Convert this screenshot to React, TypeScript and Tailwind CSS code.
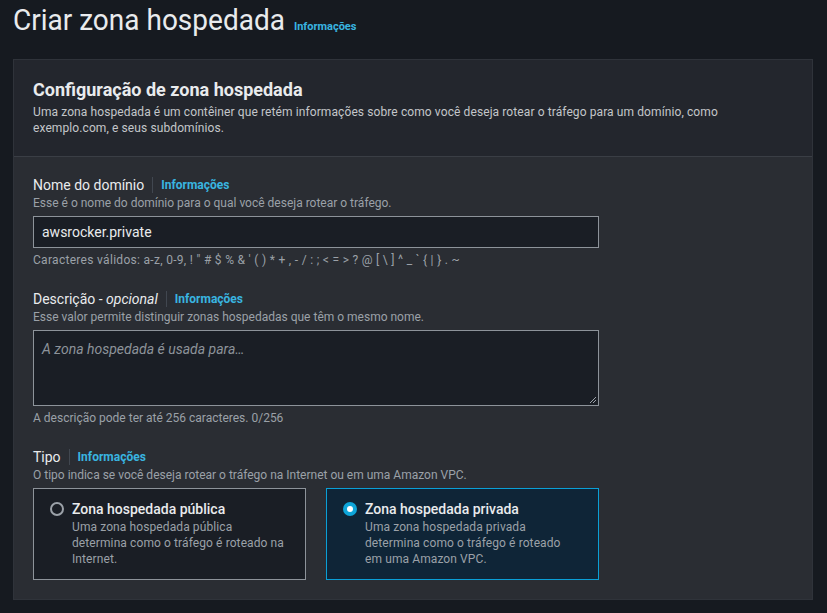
import React from "react";

const font = { fontFamily: 'Roboto, "Noto Sans", sans-serif' };

function Info({ small }: { small?: boolean }) {
  return <span className={(small ? "text-[11px]" : "text-[12px]") + " font-bold text-[#39b5e0]"}>Informações</span>;
}

function Label({ children }: { children: React.ReactNode }) {
  return (
    <div className="flex items-center gap-2 leading-[20px]">
      <span className="text-[14px] text-[#e9ebed]">{children}</span>
      <span className="w-px h-[16px] bg-[#414750]" />
      <Info />
    </div>
  );
}

export default function App() {
  return (
    <div className="min-h-[613px] w-[827px] bg-[#161a20] flex" style={font}>
      <div className="flex-1 pl-[13px] pr-[14px]">
        <div className="flex items-baseline gap-[9px] pt-[2px] h-[59px]">
          <h1 className="text-[28px] leading-[38px] font-normal text-[#e9ebed] scale-y-[1.05]">Criar zona hospedada</h1>
          <Info small />
        </div>
        <div className="bg-[#2a2d33] border border-[#2f333a] h-[541px]">
          <div className="bg-[#23262d] px-[19px] pt-[18px] pb-[20px] border-b border-[#3a3e45]">
            <h2 className="text-[18px] leading-[24px] font-bold text-[#e9ebed]">Configuração de zona hospedada</h2>
            <p className="text-[12px] leading-[16px] text-[#c3c6ca] mt-[2px] pr-[70px] tracking-[0.1px]">
              Uma zona hospedada é um contêiner que retém informações sobre como você deseja rotear o tráfego para um domínio, como exemplo.com, e seus subdomínios.
            </p>
          </div>
          <div className="px-[19px] pt-[18px] w-[604px]">
            <Label>Nome do domínio</Label>
            <p className="text-[12px] leading-[16px] text-[#9ba1a8]">Esse é o nome do domínio para o qual você deseja rotear o tráfego.</p>
            <div className="mt-[5px] h-[32px] border border-[#8d939a] bg-[#1a1e25] flex items-center px-[8px] text-[14px] text-[#e9ebed]">
              awsrocker.private
            </div>
            <p className="mt-[4px] text-[12px] leading-[16px] text-[#9ba1a8] tracking-[0.3px]">
              Caracteres válidos: a-z, 0-9, ! " # $ % &amp; ' ( ) * + , - / : ; &lt; = &gt; ? @ [ \ ] ^ _ ` {"{"} | {"}"} . ~
            </p>

            <div className="mt-[21px]">
              <div className="flex items-center gap-2 leading-[20px]">
                <span className="text-[14px] text-[#e9ebed]">
                  Descrição - <i>opcional</i>
                </span>
                <span className="w-px h-[16px] bg-[#414750]" />
                <Info />
              </div>
              <p className="text-[12px] leading-[16px] text-[#9ba1a8]">Esse valor permite distinguir zonas hospedadas que têm o mesmo nome.</p>
              <div className="relative mt-[5px] h-[76px] border border-[#8d939a] bg-[#1a1e25] px-[8px] py-[6px]">
                <span className="text-[14px] italic text-[#8d939a]">A zona hospedada é usada para…</span>
                <svg className="absolute right-[1px] bottom-[1px]" width="8" height="8" viewBox="0 0 8 8">
                  <path d="M7 1L1 7M7 4L4 7" stroke="#9ba1a8" strokeWidth="1" />
                </svg>
              </div>
              <p className="mt-[4px] text-[12px] leading-[16px] text-[#9ba1a8]">A descrição pode ter até 256 caracteres. 0/256</p>
            </div>

            <div className="mt-[21px]">
              <Label>Tipo</Label>
              <p className="text-[12px] leading-[16px] text-[#9ba1a8]">O tipo indica se você deseja rotear o tráfego na Internet ou em uma Amazon VPC.</p>
              <div className="mt-[5px] grid grid-cols-2 gap-[20px]">
                <div className="h-[92px] border border-[#8d939a] bg-[#1a1e25] pl-[16px] pt-[10px] flex gap-[8px]">
                  <span className="mt-[3px] w-[14px] h-[14px] rounded-full border-2 border-[#9ba1a8] shrink-0" />
                  <div>
                    <div className="text-[14px] leading-[20px] font-medium text-[#e9ebed]">Zona hospedada pública</div>
                    <div className="text-[12px] leading-[16px] text-[#9ba1a8] tracking-[0.1px]">
                      Uma zona hospedada pública
                      <br />
                      determina como o tráfego é roteado na
                      <br />
                      Internet.
                    </div>
                  </div>
                </div>
                <div className="h-[92px] border border-[#0a9fd6] bg-[#0f2537] pl-[16px] pt-[10px] flex gap-[8px]">
                  <span className="mt-[3px] w-[14px] h-[14px] rounded-full bg-[#0ea5d9] shrink-0 flex items-center justify-center">
                    <span className="w-[6px] h-[6px] rounded-full bg-white" />
                  </span>
                  <div>
                    <div className="text-[14px] leading-[20px] font-medium text-[#e9ebed]">Zona hospedada privada</div>
                    <div className="text-[12px] leading-[16px] text-[#9ba1a8] tracking-[0.1px]">
                      Uma zona hospedada privada
                      <br />
                      determina como o tráfego é roteado
                      <br />
                      em uma Amazon VPC.
                    </div>
                  </div>
                </div>
              </div>
            </div>
          </div>
        </div>
      </div>
    </div>
  );
}
